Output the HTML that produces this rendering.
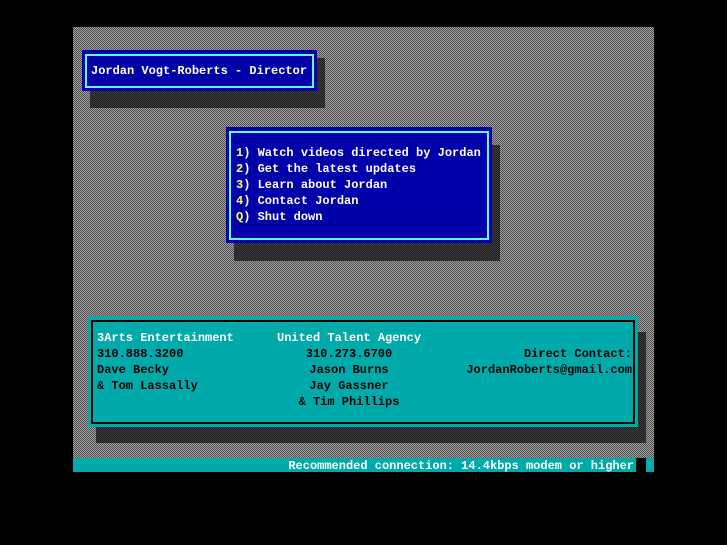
<!DOCTYPE html><html><head><style>
*{margin:0;padding:0;box-sizing:border-box}
body{width:727px;height:545px;background:#000;position:relative;overflow:hidden;font-family:"Liberation Mono",monospace;font-size:12px;font-weight:bold}
.a{position:absolute}
.dith{background:repeating-conic-gradient(#a0a0a0 0 25%,#505050 0 50%) 0 0/2px 2px}
.sh{background:repeating-conic-gradient(#3a3a3a 0 25%,#222 0 50%) 0 0/2px 2px}
.blue{background:#0000aa}
.t{position:absolute;white-space:pre;line-height:16px}
</style></head><body>
<div class="a dith" style="left:73px;top:27px;width:581px;height:431px"></div>
<div class="a sh" style="left:90px;top:58px;width:235px;height:50px"></div>
<div class="a blue" style="left:82px;top:50px;width:235px;height:41px"></div>
<div class="a" style="left:85px;top:54px;width:229px;height:34px;border:2px solid #55ffff"></div>
<div class="t" style="left:91px;top:63px;color:#fff">Jordan Vogt-Roberts - Director</div>
<div class="a sh" style="left:234px;top:145px;width:266px;height:116px"></div>
<div class="a blue" style="left:226px;top:127px;width:266px;height:116px"></div>
<div class="a" style="left:229px;top:131px;width:260px;height:109px;border:2px solid #55ffff"></div>
<div class="t" style="left:236px;top:145px;color:#fff"><span style="color:#ffff55">1</span>) Watch videos directed by Jordan
<span style="color:#ffff55">2</span>) Get the latest updates
<span style="color:#ffff55">3</span>) Learn about Jordan
<span style="color:#ffff55">4</span>) Contact Jordan
<span style="color:#ffff55">Q</span>) Shut down</div>
<div class="a sh" style="left:96px;top:332px;width:550px;height:111px"></div>
<div class="a" style="left:88px;top:316px;width:550px;height:111px;background:#00aaaa"></div>
<div class="a" style="left:91px;top:320px;width:544px;height:104px;border:2px solid #000"></div>
<div class="t" style="left:97px;top:330px;color:#fff">3Arts Entertainment</div>
<div class="t" style="left:97px;top:346px;color:#000">310.888.3200
Dave Becky
&amp; Tom Lassally</div>
<div class="t" style="left:277px;top:330px;color:#fff">United Talent Agency</div>
<div class="t" style="left:240px;width:218px;top:346px;color:#000;text-align:center">310.273.6700
Jason Burns
Jay Gassner
&amp; Tim Phillips</div>
<div class="t" style="left:400px;width:232px;top:346px;color:#000;text-align:right">Direct Contact:
JordanRoberts@gmail.com</div>
<div class="a" style="left:73px;top:458px;width:581px;height:14px;background:#00aaaa"></div>
<div class="a" style="left:636px;top:458px;width:10px;height:14px;background:#000"></div>
<div class="t" style="left:200px;width:434px;top:458px;color:#fff;text-align:right">Recommended connection: 14.4kbps modem or higher</div>
</body></html>
